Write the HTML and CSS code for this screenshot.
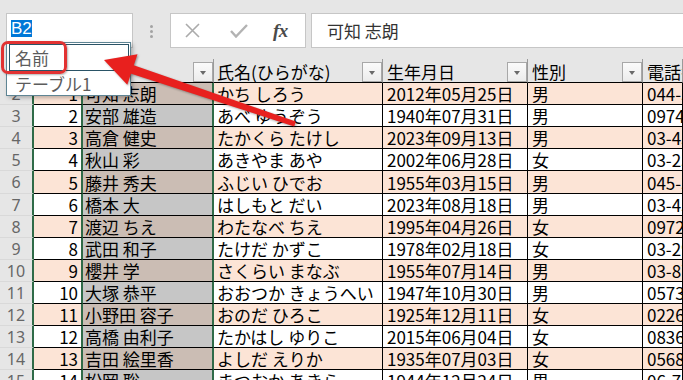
FILE: index.html
```html
<!DOCTYPE html>
<html lang="ja">
<head>
<meta charset="utf-8">
<title>Excel 名前ボックス</title>
<link rel="stylesheet" href="styles.css">
</head>
<body>
<div class="app">
  <div class="toolbar">
    <div class="namebox"><span class="sel">B2</span></div>
    <div class="grip"><i></i><i></i><i></i></div>
    <div class="btnbox">
      <svg class="ico-x" width="15" height="15" viewBox="0 0 15 15"><path d="M1 1 L14 14 M14 1 L1 14"/></svg>
      <svg class="ico-check" width="18" height="14" viewBox="0 0 18 14"><path d="M1 7 L6 12.5 L17 1"/></svg>
      <span class="fx">fx</span>
    </div>
    <div class="formula">可知 志朗</div>
  </div>

  <div class="sheet">
    <div class="row head">
      <div class="rh">1</div>
      <div class="cell ca"><span class="t">No.</span><span class="dd"></span></div>
      <div class="cell cb"><span class="t">名前</span><span class="dd"></span></div>
      <div class="cell cc"><span class="t">氏名(ひらがな)</span><span class="dd"></span></div>
      <div class="cell cd"><span class="t">生年月日</span><span class="dd"></span></div>
      <div class="cell ce"><span class="t">性別</span><span class="dd"></span></div>
      <div class="cell cf"><span class="t">電話番号</span></div>
    </div>
    <div class="row r alt"><div class="rh">2</div><div class="cell ca">1</div><div class="cell cb">可知 志朗</div><div class="cell cc">かち しろう</div><div class="cell cd">2012年05月25日</div><div class="cell ce">男</div><div class="cell cf">044-333-1234</div></div>
    <div class="row r"><div class="rh">3</div><div class="cell ca">2</div><div class="cell cb">安部 雄造</div><div class="cell cc">あべ ゆうぞう</div><div class="cell cd">1940年07月31日</div><div class="cell ce">男</div><div class="cell cf">0974-55-1234</div></div>
    <div class="row r alt"><div class="rh">4</div><div class="cell ca">3</div><div class="cell cb">高倉 健史</div><div class="cell cc">たかくら たけし</div><div class="cell cd">2023年09月13日</div><div class="cell ce">男</div><div class="cell cf">03-4567-8901</div></div>
    <div class="row r"><div class="rh">5</div><div class="cell ca">4</div><div class="cell cb">秋山 彩</div><div class="cell cc">あきやま あや</div><div class="cell cd">2002年06月28日</div><div class="cell ce">女</div><div class="cell cf">03-2345-6789</div></div>
    <div class="row r alt tall"><div class="rh">6</div><div class="cell ca">5</div><div class="cell cb">藤井 秀夫</div><div class="cell cc">ふじい ひでお</div><div class="cell cd">1955年03月15日</div><div class="cell ce">男</div><div class="cell cf">045-321-4567</div></div>
    <div class="row r"><div class="rh">7</div><div class="cell ca">6</div><div class="cell cb">橋本 大</div><div class="cell cc">はしもと だい</div><div class="cell cd">2023年08月18日</div><div class="cell ce">男</div><div class="cell cf">03-4512-3456</div></div>
    <div class="row r alt"><div class="rh">8</div><div class="cell ca">7</div><div class="cell cb">渡辺 ちえ</div><div class="cell cc">わたなべ ちえ</div><div class="cell cd">1995年04月26日</div><div class="cell ce">女</div><div class="cell cf">0972-34-5678</div></div>
    <div class="row r"><div class="rh">9</div><div class="cell ca">8</div><div class="cell cb">武田 和子</div><div class="cell cc">たけだ かずこ</div><div class="cell cd">1978年02月18日</div><div class="cell ce">女</div><div class="cell cf">03-2987-6543</div></div>
    <div class="row r alt"><div class="rh">10</div><div class="cell ca">9</div><div class="cell cb">櫻井 学</div><div class="cell cc">さくらい まなぶ</div><div class="cell cd">1955年07月14日</div><div class="cell ce">男</div><div class="cell cf">03-8765-4321</div></div>
    <div class="row r"><div class="rh">11</div><div class="cell ca">10</div><div class="cell cb">大塚 恭平</div><div class="cell cc">おおつか きょうへい</div><div class="cell cd">1947年10月30日</div><div class="cell ce">男</div><div class="cell cf">0573-12-3456</div></div>
    <div class="row r alt"><div class="rh">12</div><div class="cell ca">11</div><div class="cell cb">小野田 容子</div><div class="cell cc">おのだ ひろこ</div><div class="cell cd">1925年12月11日</div><div class="cell ce">女</div><div class="cell cf">0226-78-9012</div></div>
    <div class="row r"><div class="rh">13</div><div class="cell ca">12</div><div class="cell cb">高橋 由利子</div><div class="cell cc">たかはし ゆりこ</div><div class="cell cd">2015年06月04日</div><div class="cell ce">女</div><div class="cell cf">0836-45-6789</div></div>
    <div class="row r alt"><div class="rh">14</div><div class="cell ca">13</div><div class="cell cb">吉田 絵里香</div><div class="cell cc">よしだ えりか</div><div class="cell cd">1935年07月03日</div><div class="cell ce">女</div><div class="cell cf">0568-90-1234</div></div>
    <div class="row r"><div class="rh">15</div><div class="cell ca">14</div><div class="cell cb">松岡 聡</div><div class="cell cc">まつおか あきら</div><div class="cell cd">1944年12月24日</div><div class="cell ce">男</div><div class="cell cf">06-7890-1234</div></div>
  </div>

  <div class="namelist">
    <div class="item on">名前</div>
    <div class="item">テーブル1</div>
  </div>
  <div class="callout"></div>

  <svg class="arrow" width="683" height="380" viewBox="0 0 683 380">
    <polygon points="126.6,72.3 294.2,126.4 295.8,121.6 129.4,63.7"/>
    <polygon points="104,60 127.3,84.7 137.5,54.3"/>
  </svg>
</div>
</body>
</html>
```

FILE: styles.css
```css
html, body {
  margin: 0;
  padding: 0;
}

.app {
  position: relative;
  width: 683px;
  height: 380px;
  overflow: hidden;
  background: #e6e6e6;
  font-family: "Noto Sans CJK JP", "Noto Sans", sans-serif;
}

/* ---------- formula bar ---------- */
.toolbar {
  display: flex;
  align-items: flex-start;
  height: 59px;
  padding-top: 13px;
  box-sizing: border-box;
}

.namebox {
  margin-left: 6px;
  width: 127px;
  height: 35px;
  box-sizing: border-box;
  background: #fff;
  border: 1px solid #c6c6c6;
  display: flex;
  align-items: flex-start;
  padding: 6px 0 0 4px;
}

.sel {
  display: block;
  height: 17px;
  background: #0078d7;
  color: #fff;
  font: 17px/17px "Liberation Sans", Arial, sans-serif;
}

.grip {
  width: 37px;
  display: flex;
  flex-direction: column;
  align-items: center;
  gap: 2px;
  padding-top: 12px;
}

.grip i {
  width: 3px;
  height: 3px;
  border-radius: 50%;
  background: #a3a3a3;
}

.btnbox {
  width: 136px;
  height: 35px;
  box-sizing: border-box;
  background: #fff;
  border: 1px solid #c6c6c6;
  display: flex;
  align-items: center;
  padding-left: 14px;
}

.ico-x path {
  stroke: #ababab;
  stroke-width: 1.6;
  fill: none;
}

.ico-check {
  margin-left: 30px;
}

.ico-check path {
  stroke: #b3b3b3;
  stroke-width: 2.4;
  fill: none;
}

.fx {
  margin-left: 25px;
  font: italic bold 19px/19px "Liberation Serif", "DejaVu Serif", serif;
  color: #4a4a4a;
  letter-spacing: -0.5px;
}

.formula {
  margin-left: 5px;
  flex: 1;
  height: 35px;
  box-sizing: border-box;
  background: #fff;
  border: 1px solid #c6c6c6;
  border-right: none;
  display: flex;
  align-items: center;
  padding-left: 15px;
  font-size: 17px;
  color: #333;
}

/* ---------- sheet ---------- */
.row {
  display: grid;
  grid-template-columns: 34px 49px 131px 169px 145px 115px 1fr;
  grid-template-rows: 100%;
  height: 22px;
  overflow: hidden;
}

.row.tall {
  height: 23px;
}

.row.head {
  height: 24px;
}

.rh {
  display: flex;
  align-items: center;
  justify-content: center;
  background: #e6e6e6;
  color: #666;
  font: 16px/16px "Noto Sans", sans-serif;
  box-sizing: border-box;
  min-height: 0;
}

.r .rh {
  border-right: 2px solid #2f6b48;
  border-bottom: 1px solid #d9d9d9;
}

.cell {
  box-sizing: border-box;
  min-height: 0;
  display: flex;
  align-items: flex-end;
  padding: 0 0 2px 4px;
  border-right: 1px solid #000;
  border-bottom: 1px solid #000;
  font-size: 17px;
  line-height: 17px;
  color: #000;
  white-space: nowrap;
  overflow: hidden;
  background: #fff;
}

.r.alt .cell {
  background: #fce4d6;
}

.ca {
  justify-content: flex-end;
  padding-left: 0;
  padding-right: 3px;
}

.r .ca,
.r .cb {
  border-right: 2px solid #2f6b48;
}

.cb {
  padding-left: 2px;
}

.r .cb {
  background: #c6c6c6;
}

.r.alt .cb {
  background: #cbbdb4;
}

.cc {
  padding-left: 3px;
}

/* table header row */
.head .cell {
  background: #e6e6e6;
  justify-content: space-between;
  padding: 0 0 0 3px;
  border-right: 1px solid #9a9a9a;
}

.head .ca {
  justify-content: space-between;
}

.head .t {
  padding-bottom: 2px;
}

.head .cd,
.head .ce,
.head .cf {
  padding-left: 4px;
}

.dd {
  flex: none;
  position: relative;
  width: 20px;
  height: 20px;
  box-sizing: border-box;
  border: 1px solid #a8a8a8;
  background: linear-gradient(#fbfbfb, #ececec);
}

.dd::after {
  content: "";
  position: absolute;
  left: 6px;
  top: 8px;
  border-left: 3px solid transparent;
  border-right: 3px solid transparent;
  border-top: 4px solid #6a6a6a;
}

/* ---------- overlays ---------- */
.namelist {
  position: absolute;
  left: 6px;
  top: 42px;
  width: 125px;
  height: 54px;
  box-sizing: border-box;
  background: #fff;
  border: 1px solid #5f8594;
  box-shadow: 2px 2px 4px rgba(0, 0, 0, 0.25);
  padding: 1px 1px 0 2px;
  font-size: 17px;
  line-height: 17px;
  color: #5c5c5c;
}

.item {
  height: 24px;
  box-sizing: border-box;
  display: flex;
  align-items: center;
  padding-left: 6px;
}

.item.on {
  height: 27px;
  border: 1px solid #2a5366;
  padding-left: 5px;
}

.callout {
  position: absolute;
  left: 1px;
  top: 41px;
  width: 66px;
  height: 33px;
  box-sizing: border-box;
  border: 3px solid #e23232;
  border-radius: 7px;
  box-shadow: 1px 1px 2px rgba(0, 0, 0, 0.3);
}

.arrow {
  position: absolute;
  left: 0;
  top: 0;
  pointer-events: none;
  filter: drop-shadow(1px 1px 1px rgba(0, 0, 0, 0.35));
}

.arrow polygon {
  fill: #e8201e;
}
```
